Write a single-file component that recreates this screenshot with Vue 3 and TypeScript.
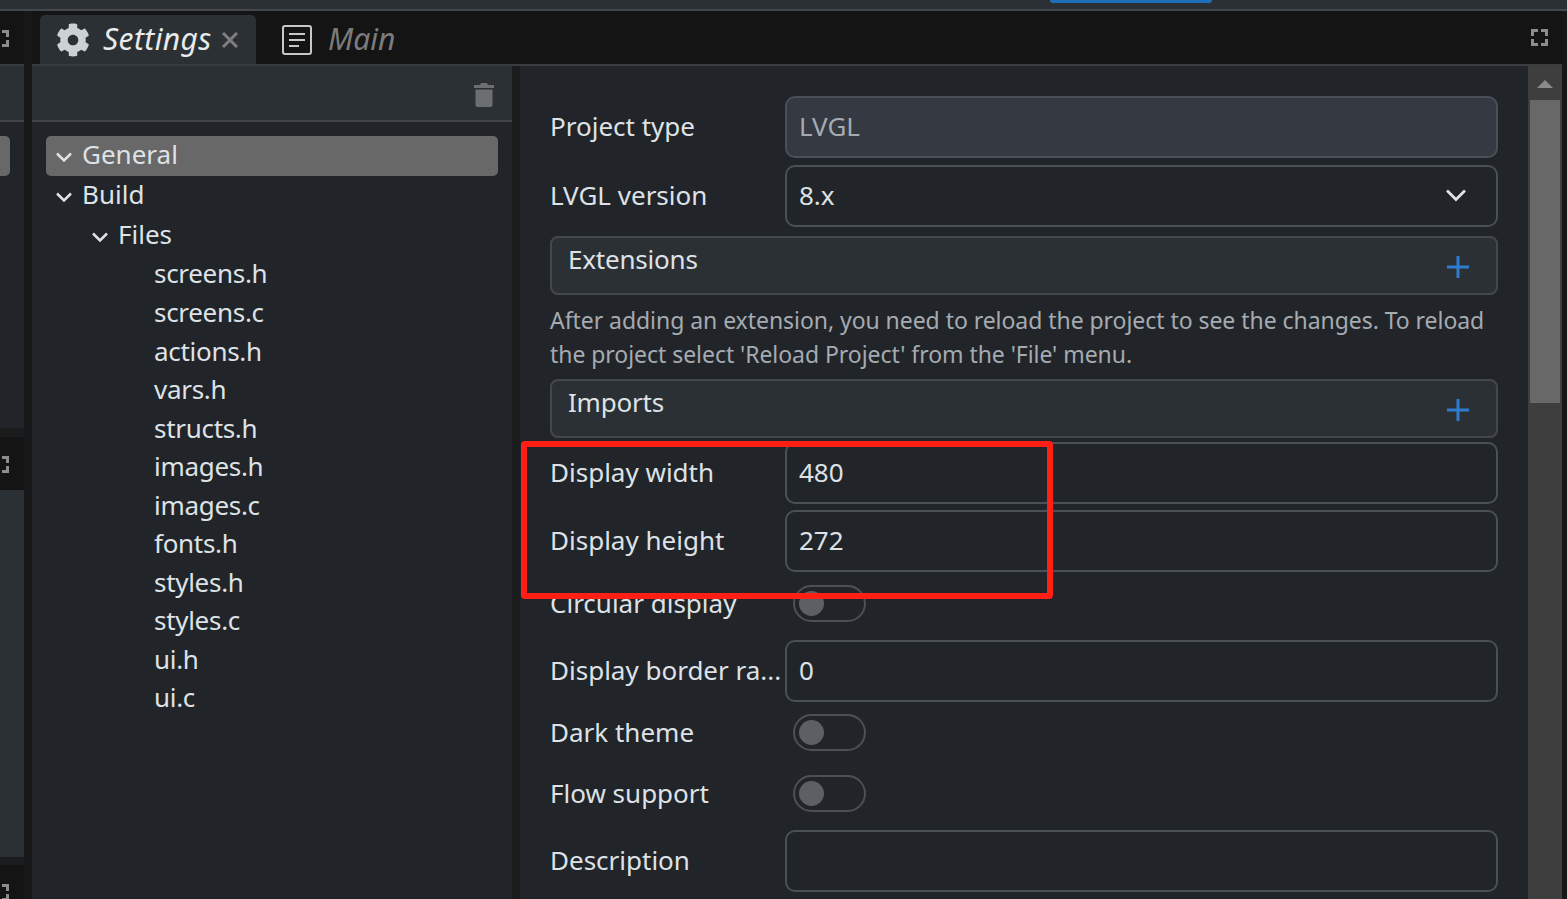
<script setup lang="ts">
interface TreeRow { label: string; depth: number; open?: boolean; selected?: boolean; tall?: boolean }
const treeRows: TreeRow[] = [
  { label: 'General', depth: 0, open: true, selected: true, tall: true },
  { label: 'Build', depth: 0, open: true, tall: true },
  { label: 'Files', depth: 1, open: true, tall: true },
  { label: 'screens.h', depth: 2, tall: true },
  { label: 'screens.c', depth: 2 },
  { label: 'actions.h', depth: 2 },
  { label: 'vars.h', depth: 2 },
  { label: 'structs.h', depth: 2 },
  { label: 'images.h', depth: 2 },
  { label: 'images.c', depth: 2 },
  { label: 'fonts.h', depth: 2 },
  { label: 'styles.h', depth: 2 },
  { label: 'styles.c', depth: 2 },
  { label: 'ui.h', depth: 2 },
  { label: 'ui.c', depth: 2 },
]
const gear = 'M487.4 315.7l-42.6-24.6c4.3-23.2 4.3-47 0-70.2l42.6-24.6c4.9-2.8 7.1-8.6 5.5-14-11.1-35.6-30-67.8-54.7-94.6-3.8-4.1-10-5.1-14.8-2.3L380.8 110c-17.9-15.4-38.5-27.3-60.8-35.1V25.8c0-5.6-3.9-10.5-9.4-11.7-36.7-8.2-74.3-7.8-109.2 0-5.5 1.2-9.4 6.1-9.4 11.7V75c-22.2 7.9-42.8 19.8-60.8 35.1L88.7 85.5c-4.9-2.8-11-1.9-14.8 2.3-24.7 26.7-43.6 58.9-54.7 94.6-1.7 5.4.6 11.2 5.5 14L67.3 221c-4.3 23.2-4.3 47 0 70.2l-42.6 24.6c-4.9 2.8-7.1 8.6-5.5 14 11.1 35.6 30 67.8 54.7 94.6 3.8 4.1 10 5.1 14.8 2.3l42.6-24.6c17.9 15.4 38.5 27.3 60.8 35.1v49.2c0 5.6 3.9 10.5 9.4 11.7 36.7 8.2 74.3 7.8 109.2 0 5.5-1.2 9.4-6.1 9.4-11.7v-49.2c22.2-7.9 42.8-19.8 60.8-35.1l42.6 24.6c4.9 2.8 11 1.9 14.8-2.3 24.7-26.7 43.6-58.9 54.7-94.6 1.5-5.5-.7-11.3-5.6-14.1zM256 336c-44.1 0-80-35.9-80-80s35.9-80 80-80 80 35.9 80 80-35.9 80-80 80z'
const corners = 'M1.500 7V1.500H7M10 1.500h5.500V7M15.500 10v5.500H10M7 15.500H1.500V10'
</script>

<template>
  <div class="app">
    <div class="topbar"><span class="top-accent"></span></div>
    <div class="workspace">
      <aside class="sliver">
        <div class="sliver-tabs sliver-tabs-a"><svg class="fs-icon" viewBox="0 0 17 17"><path :d="corners" /></svg></div>
        <div class="sliver-panel sliver-panel-a">
          <div class="sliver-head"></div>
          <div class="sliver-sel"></div>
        </div>
        <div class="sliver-tabs sliver-tabs-b"><svg class="fs-icon" viewBox="0 0 17 17"><path :d="corners" /></svg></div>
        <div class="sliver-panel sliver-panel-b"></div>
        <div class="sliver-tabs sliver-tabs-c"><svg class="fs-icon" viewBox="0 0 17 17"><path :d="corners" /></svg></div>
      </aside>
      <main class="editor">
        <div class="tabbar">
          <div class="tab active">
            <svg class="gear" viewBox="0 0 512 512"><path :d="gear" /></svg>
            <span class="tab-title settings">Settings</span>
            <svg class="close" viewBox="0 0 16 16"><path d="M1 1l14 14M15 1L1 15" /></svg>
          </div>
          <div class="tab">
            <svg class="doc" viewBox="0 0 30 30">
              <rect x="1" y="1" width="28" height="28" rx="2" />
              <path d="M7 9h16M7 15h16M7 21h10" />
            </svg>
            <span class="tab-title muted">Main</span>
          </div>
          <svg class="fs-icon tab-fs" viewBox="0 0 17 17"><path :d="corners" /></svg>
        </div>
        <div class="body">
          <section class="tree-pane">
            <div class="tree-head">
              <svg class="trash" viewBox="0 0 20 24">
                <path d="M7 0h6l1 2h6v3H0V2h6zM1.500 6.500h17V22a2 2 0 0 1-2 2h-13a2 2 0 0 1-2-2z" />
              </svg>
            </div>
            <div class="tree">
              <div
                v-for="row in treeRows"
                :key="row.label"
                class="tree-row"
                :class="[`depth-${row.depth}`, { selected: row.selected, tall: row.tall }]"
              >
                <svg v-if="row.open" class="chev" viewBox="0 0 18 12"><path d="M2 2.500l7 7 7-7" /></svg>
                <span class="tree-label">{{ row.label }}</span>
              </div>
            </div>
          </section>
          <div class="gutter"></div>
          <section class="form">
            <div class="row">
              <label>Project type</label>
              <div class="input readonly">LVGL</div>
            </div>
            <div class="row gap-7">
              <label>LVGL version</label>
              <div class="input select">
                <span>8.x</span>
                <svg class="select-chev" viewBox="0 0 22 14"><path d="M2 2.500l9 9 9-9" /></svg>
              </div>
            </div>
            <div class="group gap-9">
              <span>Extensions</span>
              <svg class="plus" viewBox="0 0 22 22"><path d="M11 0v22M0 11h22" /></svg>
            </div>
            <p class="help">After adding an extension, you need to reload the project to see the changes. To reload<br />the project select 'Reload Project' from the 'File' menu.</p>
            <div class="group">
              <span>Imports</span>
              <svg class="plus" viewBox="0 0 22 22"><path d="M11 0v22M0 11h22" /></svg>
            </div>
            <div class="row gap-4">
              <label>Display width</label>
              <div class="input">480</div>
            </div>
            <div class="row gap-6">
              <label>Display height</label>
              <div class="input">272</div>
            </div>
            <div class="row toggle-row gap-13">
              <label>Circular display</label>
              <span class="toggle"><span class="knob"></span></span>
            </div>
            <div class="row gap-18">
              <label>Display border ra...</label>
              <div class="input">0</div>
            </div>
            <div class="row toggle-row gap-12">
              <label>Dark theme</label>
              <span class="toggle"><span class="knob"></span></span>
            </div>
            <div class="row toggle-row gap-24">
              <label>Flow support</label>
              <span class="toggle"><span class="knob"></span></span>
            </div>
            <div class="row gap-18">
              <label>Description</label>
              <div class="input"></div>
            </div>
          </section>
          <div class="scrollbar">
            <div class="scroll-up"><span class="arrow"></span></div>
            <div class="thumb"></div>
          </div>
        </div>
      </main>
    </div>
    <div class="highlight"></div>
  </div>
</template>

<style>
html, body { margin: 0; background: #1a1c1e; }
</style>

<style scoped>
.app {
  position: relative;
  width: 1567px;
  height: 899px;
  overflow: hidden;
  display: flex;
  flex-direction: column;
  background: #1a1c1e;
  color: #dee2e6;
  font-family: "Noto Sans", "Open Sans", sans-serif;
  font-size: 26px;
}
.topbar {
  height: 9px;
  flex: none;
  position: relative;
  background: #2b3035;
  border-bottom: 2px solid #45484b;
}
.top-accent {
  position: absolute;
  left: 1050px;
  top: 0;
  width: 162px;
  height: 3px;
  border-radius: 0 0 5px 5px;
  background: #1f6fb8;
}
.workspace { flex: 1; min-height: 0; display: flex; background: #161718; }
.sliver { width: 24px; flex: none; display: flex; flex-direction: column; margin-right: 8px; background: #1a1c1e; }
.sliver-tabs {
  height: 53px;
  flex: none;
  background: #141414;
  overflow: hidden;
  position: relative;
  box-sizing: border-box;
}
.sliver-tabs .fs-icon { position: absolute; left: -8px; top: 19px; }
.sliver-tabs-a { height: 55px; border-bottom: 2px solid #3a3d40; }
.sliver-tabs-b { margin-top: 9px; }
.sliver-tabs-c { margin-top: 8px; flex: 1; }
.sliver-panel { background: #2b3035; flex: none; }
.sliver-panel-a { height: 362px; background: #212529; }
.sliver-head { height: 54px; background: #2b3035; border-bottom: 2px solid #3f4347; }
.sliver-sel { width: 10px; height: 40px; margin-top: 14px; border-radius: 0 5px 5px 0; background: #686868; }
.sliver-panel-b { height: 367px; }
.fs-icon { width: 17px; height: 17px; flex: none; }
.fs-icon path { fill: none; stroke: #8c8c8c; stroke-width: 3; }
.editor { flex: 1; min-width: 0; display: flex; flex-direction: column; margin-right: 5px; }
.tabbar {
  height: 55px;
  flex: none;
  display: flex;
  align-items: flex-end;
  padding-left: 8px;
  background: #141414;
  box-sizing: border-box;
  border-bottom: 2px solid #3a3d40;
}
.tab {
  height: 49px;
  display: flex;
  align-items: center;
  box-sizing: border-box;
  padding: 0 0 2px 16px;
  font-style: italic;
  font-size: 30px;
  border-radius: 5px 5px 0 0;
}
.tab.active { width: 216px; background: #2b3035; color: #e8eaec; }
.gear { width: 34px; height: 34px; margin: 2px 13px 0 0; flex: none; }
.gear path { fill: #cdd1d4; }
.tab-title { white-space: nowrap; }
.tab-title.settings { letter-spacing: 0.4px; }
.tab-title.muted { color: #7c7c7c; }
.close { width: 16px; height: 16px; margin: 2px 0 0 10px; flex: none; }
.close path { stroke: #7e7e7e; stroke-width: 3; fill: none; }
.doc { width: 30px; height: 30px; margin: 2px 16px 0 10px; flex: none; }
.doc rect, .doc path { fill: none; stroke: #c8c8c8; stroke-width: 2; }
.tab-fs { margin: 0 14px 18px auto; }
.body { flex: 1; min-height: 0; display: flex; }
.tree-pane { width: 480px; flex: none; background: #212529; display: flex; flex-direction: column; }
.tree-head {
  height: 56px;
  flex: none;
  box-sizing: border-box;
  background: #2b3035;
  border-bottom: 2px solid #3f4347;
  display: flex;
  align-items: center;
  justify-content: flex-end;
  padding: 4px 18px 0 0;
}
.trash { width: 20px; height: 24px; }
.trash path { fill: #6c6e70; }
.tree { padding: 14px 14px 0; }
.tree-row {
  height: 38.5px;
  display: flex;
  align-items: center;
  white-space: nowrap;
  border-radius: 5px;
  position: relative;
}
.tree-row.tall { height: 39.700px; }
.tree-row.selected { height: 40px; background: #686868; }
.tree-label { padding-bottom: 4px; }
.depth-0 { padding-left: 36px; }
.depth-1 { padding-left: 72px; }
.depth-2 { padding-left: 108px; letter-spacing: -0.3px; }
.chev { position: absolute; width: 18px; height: 12px; top: 15px; }
.depth-0 .chev { left: 9px; }
.depth-1 .chev { left: 45px; }
.chev path { fill: none; stroke: #dee2e6; stroke-width: 2.500; }
.gutter { width: 8px; flex: none; background: #1a1c1e; }
.form { flex: 1; min-width: 0; box-sizing: border-box; padding: 30px 30px 0; background: #212529; overflow: hidden; }
.row { display: flex; align-items: center; }
.row label { width: 235px; flex: none; white-space: nowrap; padding-bottom: 2px; }
.input {
  flex: 1;
  height: 62px;
  box-sizing: border-box;
  border: 2px solid #495057;
  border-radius: 10px;
  padding: 0 12px 2px;
  display: flex;
  align-items: center;
  background: #212529;
}
.input.readonly { background: #343942; color: #a6abb0; }
.input.select { justify-content: space-between; }
.select-chev { width: 22px; height: 14px; margin-right: 17px; }
.select-chev path { fill: none; stroke: #dee2e6; stroke-width: 2.800; }
.group {
  height: 59px;
  box-sizing: border-box;
  padding: 3px 27px 0 16px;
  display: flex;
  justify-content: space-between;
  background: #2b3035;
  border: 2px solid #45484b;
  border-radius: 8px;
}
.group span { line-height: 36px; letter-spacing: -0.2px; }
.plus { width: 22px; height: 22px; margin-top: 15px; }
.plus path { stroke: #2e7cd0; stroke-width: 3; fill: none; }
.help { margin: 8px 0; font-size: 23px; line-height: 34px; letter-spacing: -0.05px; color: #a5abb1; white-space: nowrap; height: 68px; }
.toggle-row { height: 37px; }
.toggle {
  width: 73px;
  height: 37px;
  margin-left: 8px;
  box-sizing: border-box;
  border: 2px solid #4c5055;
  border-radius: 19px;
  display: flex;
  align-items: center;
  padding-left: 4px;
}
.knob { width: 25px; height: 25px; border-radius: 50%; background: #5c6064; }
.gap-4 { margin-top: 4px; }
.gap-6 { margin-top: 6px; }
.gap-7 { margin-top: 7px; }
.gap-9 { margin-top: 9px; }
.gap-12 { margin-top: 12px; }
.gap-13 { margin-top: 13px; }
.gap-18 { margin-top: 18px; }
.gap-24 { margin-top: 24px; }
.scrollbar { width: 34px; flex: none; background: #3e3e3e; display: flex; flex-direction: column; align-items: center; }
.scroll-up { width: 100%; height: 34px; flex: none; display: flex; justify-content: center; padding-top: 14px; box-sizing: border-box; }
.arrow { width: 0; height: 0; border-left: 8px solid transparent; border-right: 8px solid transparent; border-bottom: 8px solid #8a8a8a; }
.thumb { width: 30px; height: 303px; background: #686868; flex: none; }
.highlight {
  position: absolute;
  left: 521px;
  top: 441px;
  width: 532px;
  height: 158px;
  box-sizing: border-box;
  border: 6px solid #ff1f15;
  border-radius: 4px;
}
</style>
